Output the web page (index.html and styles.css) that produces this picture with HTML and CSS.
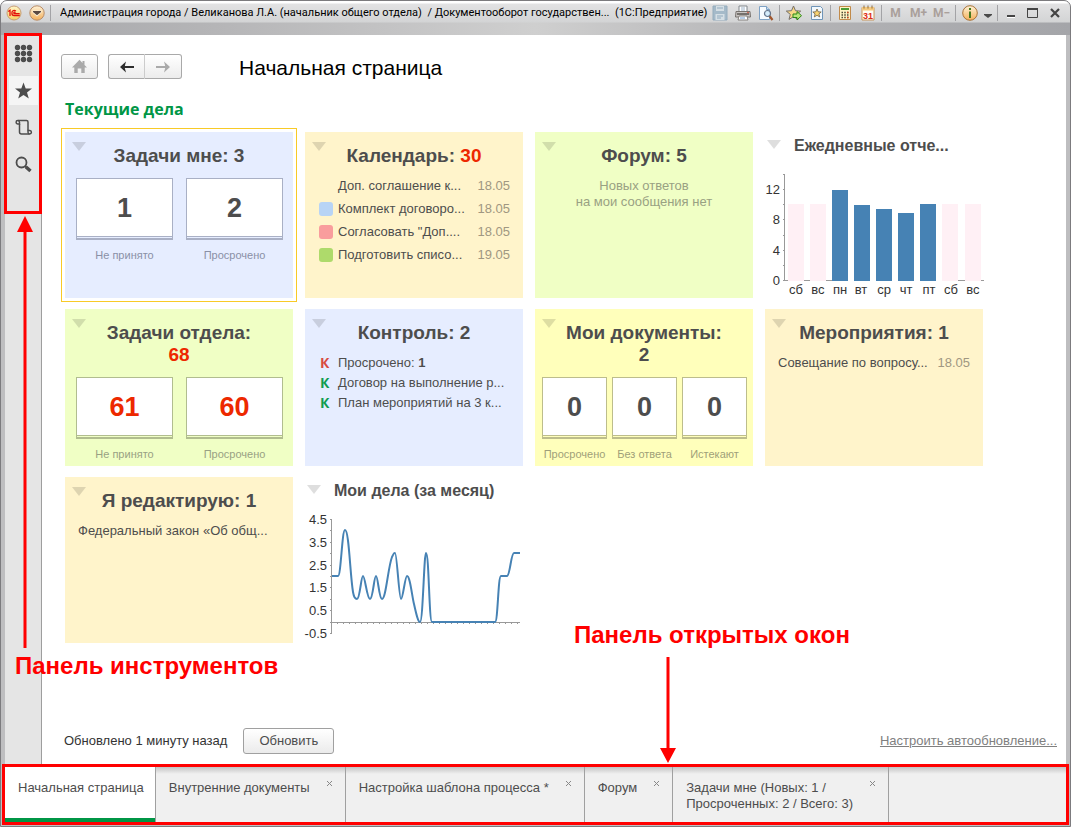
FILE: index.html
```html
<!DOCTYPE html>
<html lang="ru">
<head>
<meta charset="utf-8">
<meta name="viewport" content="width=device-width, initial-scale=1">
<title>Начальная страница</title>
<link rel="stylesheet" href="styles.css">
</head>
<body>
<div class="window">
  <header class="titlebar">
    <div class="titlebar-row">
      <button class="orb" aria-label="1С">
        <svg width="16" height="16" viewBox="0 0 16 16"><defs><linearGradient id="gold" x1="0" y1="0" x2="0" y2="1"><stop offset="0" stop-color="#fff6c8"/><stop offset="1" stop-color="#f6cf62"/></linearGradient><linearGradient id="amber" x1="0" y1="0" x2="0" y2="1"><stop offset="0" stop-color="#fff3d8"/><stop offset="1" stop-color="#f3b05c"/></linearGradient></defs><circle cx="8" cy="8" r="7" fill="url(#gold)" stroke="#c79d76"/><path d="M2.200 6.500 4 5.300V11M9.800 6.200C8.600 4.600 5.900 5.400 5.900 7.900c0 1.700 1 2.600 2.300 2.600h5.600M9.500 7.600c-.9-.9-1.700-.4-1.700.4 0 .5.400.7.900.7h5" fill="none" stroke="#e3120b" stroke-width="1.300"/></svg>
      </button>
      <button class="orb" aria-label="Главное меню">
        <svg width="16" height="16" viewBox="0 0 16 16"><circle cx="8" cy="8" r="7.200" fill="url(#amber)" stroke="#b98d68"/><path d="M3.500 5.500h9V7.500L8 11.500 3.500 7.500z" fill="#fff4dc"/><path d="M4 6h8v1L8 10.200 4 7z" fill="#5b4a42"/></svg>
      </button>
      <span class="sep"></span>
      <div class="caption">Администрация города / Великанова Л.А. (начальник общего отдела)&nbsp; / Документооборот государствен...&nbsp; (1С:Предприятие)</div>
      <div class="tools">
        <button class="tool" aria-label="Сохранить"><svg width="16" height="16" viewBox="0 0 16 16"><path d="M1 1h14v14H1z" fill="#a5bac9" stroke="#94acbd"/><path d="M4 1h8v5H4zM3.500 9h9v6h-9z" fill="#d5dfe5"/><path d="M5 3h6M5 11h6M5 13h4" stroke="#91aabd"/></svg></button>
        <button class="tool" aria-label="Печать"><svg width="16" height="16" viewBox="0 0 16 16"><path d="M4 7V1h8v6" fill="#fff" stroke="#80868c"/><path d="M6 3h4M6 5h4" stroke="#9db2c8"/><path d="M1 6.500h14l.5 5.500h-15z" fill="#c9c5c2" stroke="#77726e"/><path d="M2 9h12" stroke="#595450" stroke-width="1.500"/><path d="M4 11h8l1 4H3z" fill="#fff" stroke="#85817e"/><path d="M5 13h5" stroke="#6d9bd0"/><circle cx="13" cy="7.500" r=".8" fill="#d34b36"/></svg></button>
        <button class="tool" aria-label="Просмотр"><svg width="16" height="16" viewBox="0 0 16 16"><path d="M1.500 1.500h7l3 3v10h-10z" fill="#f7fbff" stroke="#7fa2c5"/><path d="M8.500 1.500v3h3" fill="#c5daed" stroke="#7fa2c5"/><path d="m11.500 11 3 4" stroke="#a0552c" stroke-width="2.200"/><circle cx="9.500" cy="8.500" r="3" fill="#d5ecfb" stroke="#64748b" stroke-width="1.200"/></svg></button>
        <span class="sep"></span>
        <button class="tool" aria-label="В избранное"><svg width="16" height="16" viewBox="0 0 16 16"><path d="m7.500 1 2 4.700 5.200.4-4 3.300 1.300 5-4.500-2.700L3 14.400l1.300-5-4-3.300 5.200-.4z" fill="#f8d886" stroke="#76706a"/><path d="M7 9h4V6.500l4.500 4.200L11 15v-2.500H7z" fill="#b9e67a" stroke="#2d8514"/></svg></button>
        <button class="tool" aria-label="Избранное"><svg width="16" height="16" viewBox="0 0 16 16"><path d="M2.500 1.500h9l2 2v11h-11z" fill="#f2f8fd" stroke="#6f95b8"/><path d="m8 4 1.200 2.800 3 .2-2.300 1.900.8 3L8 10.300 5.300 11.900l.8-3L3.800 7l3-.2z" fill="#f8d372" stroke="#6e6044" stroke-width=".8"/></svg></button>
        <span class="sep"></span>
        <button class="tool" aria-label="Калькулятор"><svg width="16" height="16" viewBox="0 0 16 16"><path d="M2.500 1.500h11v13h-11z" fill="#fff3c4" stroke="#c18a4a"/><path d="M4 3h8v2H4z" fill="#4a9c36"/><path d="M4.500 7.500h7M4.500 10h7M4.500 12.500h7" stroke="#4b4a35" stroke-width="1.500" stroke-dasharray="1.500 1.250"/><path d="M10 7.500h1.500M10 12.500h1.500" stroke="#d2441e" stroke-width="1.500"/></svg></button>
        <button class="tool" aria-label="Календарь"><svg width="16" height="16" viewBox="0 0 16 16"><path d="M2 2.500h12v12.500H2z" fill="#fffdf3" stroke="#c8965b"/><path d="M2 2h12v3.500H2z" fill="#f5c97d"/><path d="M4 .5v3M8 .5v3M12 .5v3" stroke="#8d6a3c"/><text x="8" y="13.500" class="cal-day">31</text></svg></button>
        <span class="sep"></span>
        <button class="tool memory">M</button>
        <button class="tool memory">M+</button>
        <button class="tool memory">M−</button>
        <span class="sep"></span>
        <button class="tool" aria-label="Справка"><svg width="16" height="16" viewBox="0 0 16 16"><circle cx="8" cy="8" r="7.300" fill="url(#amber)" stroke="#a97338"/><path d="M7 6.500h2V13H7zM7 3h2v2H7z" fill="#47791d"/></svg></button>
        <button class="tool tool-narrow" aria-label="Ещё"><svg width="10" height="12" viewBox="0 0 10 12"><path d="M1 7h8v1L5 11 1 8z" fill="#4a4a4a"/></svg></button>
        <span class="sep"></span>
        <button class="tool tool-window" aria-label="Свернуть"><svg width="14" height="14" viewBox="0 0 14 14"><path d="M3 9h8v2H3z" fill="#444"/><path d="M3 11h8v1H3z" fill="#fff"/></svg></button>
        <button class="tool tool-window" aria-label="Развернуть"><svg width="14" height="14" viewBox="0 0 14 14"><path d="M1.500 2.500h10v9h-10z" fill="none" stroke="#444"/><path d="M1 2h11v2H1z" fill="#444"/></svg></button>
        <button class="tool tool-window" aria-label="Закрыть"><svg width="14" height="14" viewBox="0 0 14 14"><path d="m3 3 8 8M11 3l-8 8" stroke="#444" stroke-width="2.200"/></svg></button>
      </div>
    </div>
  </header>

  <div class="workspace">
    <nav class="sidebar" aria-label="Панель инструментов">
      <button class="side-btn" aria-label="Меню"><svg width="19" height="19" viewBox="0 0 19 19" fill="#4d4d4d"><circle cx="3.500" cy="3.500" r="2.700"/><circle cx="9.500" cy="3.500" r="2.700"/><circle cx="15.500" cy="3.500" r="2.700"/><circle cx="3.500" cy="9.500" r="2.700"/><circle cx="9.500" cy="9.500" r="2.700"/><circle cx="15.500" cy="9.500" r="2.700"/><circle cx="3.500" cy="15.500" r="2.700"/><circle cx="9.500" cy="15.500" r="2.700"/><circle cx="15.500" cy="15.500" r="2.700"/></svg></button>
      <button class="side-btn side-btn-active" aria-label="Избранное"><svg width="19" height="19" viewBox="0 0 19 19"><path d="m9.500 1.500 2.200 6h6.300l-5 3.900 1.800 6.100-5.300-3.600-5.300 3.600L6 11.400 1 7.500h6.300z" fill="#4d4d4d"/></svg></button>
      <button class="side-btn" aria-label="История"><svg width="19" height="19" viewBox="0 0 19 19" fill="none" stroke="#4d4d4d" stroke-width="1.500"><path d="M4 2.500h8.500c1 0 1.500.6 1.500 1.500v8.500M5.500 6v8c0 1.300.8 2 2 2h8"/><path d="M5.500 6H3.700A1.700 1.700 0 1 1 5.500 4.200zM14 12.500h1.800a1.700 1.700 0 1 1-1.800 1.800z"/></svg></button>
      <button class="side-btn" aria-label="Поиск"><svg width="19" height="19" viewBox="0 0 19 19" fill="none" stroke="#4d4d4d"><circle cx="7.500" cy="7.500" r="5" stroke-width="1.800"/><path d="m11 11 1.500 1.500" stroke-width="2"/><path d="m12 12 4.500 4" stroke-width="3.400"/></svg></button>
    </nav>

    <main class="page">
      <div class="page-head">
        <button class="head-btn" aria-label="Домой"><svg width="17" height="15" viewBox="0 0 17 15"><path d="M8.500.8 11.500 4V2h2v4l2.500 2.600h-2.300V14h-3.400V9.500H6.700V14H3.300V8.600H1z" fill="#aaa"/></svg></button>
        <div class="head-group">
          <button class="head-btn" aria-label="Назад"><svg width="16" height="14" viewBox="0 0 16 14"><path d="M1 7 7 1.500 5.800 6H15v2H5.800L7 12.500z" fill="#2d2d2d"/></svg></button>
          <button class="head-btn" aria-label="Вперёд"><svg width="16" height="14" viewBox="0 0 16 14"><path d="M15 7 9 1.500 10.200 6H1v2h9.200L9 12.500z" fill="#aaa"/></svg></button>
        </div>
        <h1>Начальная страница</h1>
      </div>

      <h2>Текущие дела</h2>

      <div class="dashboard">
        <section class="tile blue selected">
          <span class="marker"></span>
          <h3>Задачи мне: 3</h3>
          <div class="counters">
            <div class="counter"><a href="#" class="count">1</a><span>Не принято</span></div>
            <div class="counter"><a href="#" class="count">2</a><span>Просрочено</span></div>
          </div>
        </section>

        <section class="tile sand">
          <span class="marker"></span>
          <h3>Календарь: <b class="alert">30</b></h3>
          <ul class="list events">
            <li><i class="swatch"></i><span>Доп. соглашение к...</span><time>18.05</time></li>
            <li><i class="swatch swatch-blue"></i><span>Комплект договоро...</span><time>18.05</time></li>
            <li><i class="swatch swatch-red"></i><span>Согласовать "Доп....</span><time>18.05</time></li>
            <li><i class="swatch swatch-green"></i><span>Подготовить списо...</span><time>19.05</time></li>
          </ul>
        </section>

        <section class="tile green">
          <span class="marker"></span>
          <h3>Форум: 5</h3>
          <p class="note">Новых ответов<br>на мои сообщения нет</p>
        </section>

        <section class="tile chart">
          <div class="chart-head"><span class="chart-marker"></span><h4>Ежедневные отче...</h4></div>
          <svg class="plot" viewBox="0 0 218 136" role="img" aria-label="Ежедневные отчеты">
            <g fill="#fff0f5"><path d="M23 42h16v77H23zM45 42h16v77H45zM177 42h16v77h-16zM200 42h16v77h-16z"/></g>
            <path d="M19.500 12v107M18 12.500h2M18 27.500h2M18 42.500h2M18 57.500h2M18 73.500h2M18 88.500h2M18 103.500h2M18 118.500h5M39 118.500h6M61 118.500h6M193 118.500h7M216 118.500h3" stroke="#999" fill="none"/>
            <path d="M67 28h16v91H67zM89 43h16v76H89zM111 47h16v72h-16zM133 51h16v68h-16zM155 42h16v77h-16z" fill="#4682b4"/>
            <g class="axis-y"><text x="15" y="32">12</text><text x="15" y="62">8</text><text x="15" y="93">4</text><text x="15" y="123">0</text></g>
            <g class="axis-x"><text x="31" y="132">сб</text><text x="53" y="132">вс</text><text x="75" y="132">пн</text><text x="96" y="132">вт</text><text x="119" y="132">ср</text><text x="141" y="132">чт</text><text x="164" y="132">пт</text><text x="186" y="132">сб</text><text x="208" y="132">вс</text></g>
          </svg>
        </section>

        <section class="tile green">
          <span class="marker"></span>
          <h3>Задачи отдела:<br><b class="alert">68</b></h3>
          <div class="counters">
            <div class="counter"><a href="#" class="count alert">61</a><span>Не принято</span></div>
            <div class="counter"><a href="#" class="count alert">60</a><span>Просрочено</span></div>
          </div>
        </section>

        <section class="tile blue">
          <span class="marker"></span>
          <h3>Контроль: 2</h3>
          <ul class="list controls">
            <li><b class="flag flag-red">К</b><span>Просрочено: <b>1</b></span></li>
            <li><b class="flag">К</b><span>Договор на выполнение р...</span></li>
            <li><b class="flag">К</b><span>План мероприятий на 3 к...</span></li>
          </ul>
        </section>

        <section class="tile yellow">
          <span class="marker"></span>
          <h3>Мои документы:<br>2</h3>
          <div class="counters counters-three">
            <div class="counter"><a href="#" class="count">0</a><span>Просрочено</span></div>
            <div class="counter"><a href="#" class="count">0</a><span>Без ответа</span></div>
            <div class="counter"><a href="#" class="count">0</a><span>Истекают</span></div>
          </div>
        </section>

        <section class="tile sand">
          <span class="marker"></span>
          <h3>Мероприятия: 1</h3>
          <ul class="list">
            <li><span>Совещание по вопросу...</span><time>18.05</time></li>
          </ul>
        </section>

        <section class="tile sand">
          <span class="marker"></span>
          <h3>Я редактирую: 1</h3>
          <ul class="list">
            <li><span>Федеральный закон «Об общ...</span></li>
          </ul>
        </section>

        <section class="tile chart">
          <div class="chart-head"><span class="chart-marker"></span><h4>Мои дела (за месяц)</h4></div>
          <svg class="plot" viewBox="0 0 218 136" role="img" aria-label="Мои дела за месяц">
            <path d="M26.500 12v115M25 12.500h2M25 23.500h2M25 35.500h2M25 46.500h2M25 58.500h2M25 69.500h2M25 80.500h2M25 92.500h2M25 103.500h2M25 126.500h2M25 115.500h190" stroke="#999" fill="none"/>
            <path d="M32 116.500h183" stroke="#999" stroke-dasharray="1 5" fill="none"/>
            <path d="M27 69h6C36 69 37 23 40 23c4 0 5 44 8 62 1 6 3 7 4 7 3 0 4-23 6-23s4 23 7 23 4-23 6-23 3 23 6 23c4 0 6-32 10-42 2-4 2-4 3-4 2 0 4 46 6 46s4-23 6-23c3 0 5 20 7 28 2 9 4 18 6 18 3 0 4-69 6-69 3 0 3 69 6 69h63c3 0 3-46 6-46h6c3 0 4-23 7-23h6" fill="none" stroke="#4682b4" stroke-width="2"/>
            <g class="axis-y"><text x="22" y="17">4.5</text><text x="22" y="40">3.5</text><text x="22" y="63">2.5</text><text x="22" y="85">1.5</text><text x="22" y="108">0.5</text><text x="22" y="131">-0.5</text></g>
          </svg>
        </section>
      </div>

      <footer class="page-foot">
        <span>Обновлено 1 минуту назад</span>
        <button class="refresh">Обновить</button>
        <a href="#" class="auto">Настроить автообновление...</a>
      </footer>
    </main>

    <div class="mark mark-toolbar">
      <div class="mark-frame"></div>
      <svg class="arrow-up" width="16" height="432" viewBox="0 0 16 432"><path d="M8 0 16 16H9.500v416h-3V16H0z" fill="#f00"/></svg>
      <strong>Панель инструментов</strong>
    </div>
    <div class="mark mark-tabs">
      <strong>Панель открытых окон</strong>
      <svg width="16" height="106" viewBox="0 0 16 106"><path d="M6.500 0h3v91H16L8 106 0 91h6.500z" fill="#f00"/></svg>
    </div>
  </div>

  <nav class="tabs" aria-label="Панель открытых окон">
    <div class="tab tab-active"><a href="#">Начальная страница</a></div>
    <div class="tab"><a href="#">Внутренние документы</a><button class="close" aria-label="Закрыть"><svg width="7" height="7" viewBox="0 0 7 7"><path d="m1 1 5 5M6 1 1 6" stroke="#888"/></svg></button></div>
    <div class="tab"><a href="#">Настройка шаблона процесса *</a><button class="close" aria-label="Закрыть"><svg width="7" height="7" viewBox="0 0 7 7"><path d="m1 1 5 5M6 1 1 6" stroke="#888"/></svg></button></div>
    <div class="tab"><a href="#">Форум</a><button class="close" aria-label="Закрыть"><svg width="7" height="7" viewBox="0 0 7 7"><path d="m1 1 5 5M6 1 1 6" stroke="#888"/></svg></button></div>
    <div class="tab"><a href="#">Задачи мне (Новых: 1 /<br>Просроченных: 2 / Всего: 3)</a><button class="close" aria-label="Закрыть"><svg width="7" height="7" viewBox="0 0 7 7"><path d="m1 1 5 5M6 1 1 6" stroke="#888"/></svg></button></div>
  </nav>
</div>
</body>
</html>
```
FILE: styles.css
```css
* { box-sizing: border-box; }

body {
  margin: 0;
  background: #fff;
  color: #4d4d4d;
  font: 13px/16px "Liberation Sans", Arial, sans-serif;
}

button {
  margin: 0;
  padding: 0;
  border: 0;
  background: none;
  color: inherit;
  font: inherit;
}

a { color: inherit; text-decoration: none; }
svg { display: block; flex: none; }
h1, h2, h3, h4, p, ul { margin: 0; padding: 0; }
ul { list-style: none; }

.window {
  display: flex;
  flex-direction: column;
  min-height: 100vh;
  border: 1px solid #7c7b7e;
  border-radius: 7px 7px 0 0;
  background: #bebec0;
  overflow: hidden;
}

/* Title bar */
.titlebar {
  padding: 2px 4px 12px 5px;
  background:
    linear-gradient(#fff 0, #fff 2px, #e2e2e3 3px, #d3d4d5 21px, transparent 22px),
    linear-gradient(90deg, #a6a7aa, #b5b5b7 20%, #cfcfcf 50%, #b5b5b7 72%, #a4a5a9);
}

.titlebar-row { display: flex; align-items: center; height: 20px; }
.orb { flex: none; width: 16px; height: 16px; margin-right: 7px; }
.orb + .sep { margin: 0 9px 0 -2px; }

.caption {
  flex: 1;
  min-width: 0;
  overflow: hidden;
  color: #000;
  font: 11px/16px Roboto, "Liberation Sans", sans-serif;
  white-space: nowrap;
}

.tools { display: flex; align-items: center; }
.sep { flex: none; width: 1px; height: 16px; margin: 0 2px; background: #a3a3a6; }
.tool { display: flex; align-items: center; justify-content: center; width: 23px; height: 18px; }
.tool-narrow { width: 14px; }
.tool-window { width: 22px; }
.memory { color: #aaa09b; font: bold 12px/16px Roboto, sans-serif; }
.cal-day { fill: #de2b16; font: bold 9px "Liberation Sans", sans-serif; text-anchor: middle; }

/* Work area */
.workspace {
  position: relative;
  display: flex;
  flex: 1;
  margin: 0 4px;
}

.sidebar {
  display: flex;
  flex: none;
  flex-direction: column;
  align-items: center;
  gap: 8px;
  width: 37px;
  padding-top: 4px;
  border-right: 1px solid #9e9e9e;
  background: #e5e5e5;
}

.side-btn { display: flex; align-items: center; justify-content: center; width: 29px; height: 29px; }
.side-btn-active { background: #f5f5f5; }

.page {
  display: flex;
  flex: 1;
  flex-direction: column;
  min-width: 0;
  padding: 19px 9px 12px 19px;
  background: #fff;
}

.page-head { display: flex; align-items: flex-start; gap: 10px; }

.head-btn {
  display: flex;
  align-items: center;
  justify-content: center;
  width: 37px;
  height: 25px;
  border: 1px solid #a9a9a9;
  border-radius: 3px;
  background: linear-gradient(#fff, #ececec);
}

.head-group { display: flex; }
.head-group .head-btn:first-child { border-right-color: #ccc; border-radius: 3px 0 0 3px; }
.head-group .head-btn:last-child { border-left: 0; border-radius: 0 3px 3px 0; }
h1 { margin-left: 47px; color: #000; font-size: 21px; font-weight: 400; line-height: 28px; }

h2 {
  margin: 15px 0 0 4px;
  color: #009646;
  font: bold 16px/24px "Open Sans", "Noto Sans", sans-serif;
}

.dashboard {
  display: grid;
  grid-template-columns: 228fr 218fr 218fr 218fr;
  grid-template-rows: minmax(166px, auto) minmax(157px, auto) minmax(166px, auto);
  gap: 11px 12px;
  max-width: 922px;
  padding: 11px 0 0 4px;
}

.tile { position: relative; min-width: 0; padding-top: 13px; background: var(--fill); }
.blue { --line: #a9b0c5; --muted: #8a90a6; --fill: #e6edff; }
.sand { --line: #c2b68f; --muted: #a09781; --fill: #fff4cb; }
.green { --line: #b1bd8f; --muted: #99a183; --fill: #f0ffc5; }
.yellow { --line: #bdbd8c; --muted: #9f9f79; --fill: #ffffbb; }
.selected { outline: 1px solid #f8ca27; outline-offset: 3px; }

.marker, .chart-marker {
  border: 7px solid transparent;
  border-top: 9px solid rgba(0, 0, 0, .13);
  border-bottom: 0;
}

.marker { position: absolute; top: 10px; left: 7px; }
h3 { color: #4d4d4d; font-size: 19px; line-height: 22px; text-align: center; }
.alert { color: #ed2800; }

.counters { display: flex; gap: 13px; margin-top: 11px; padding: 0 10px 0 11px; }
.counters-three { gap: 5px; padding: 0 6px 0 7px; }
.counter { flex: 1; min-width: 0; color: var(--muted); font-size: 11px; line-height: 14px; text-align: center; white-space: nowrap; }

.count {
  display: block;
  height: 62px;
  margin-bottom: 8px;
  border: 1px solid var(--line);
  border-bottom-width: 2px;
  background: #fff;
  box-shadow: inset 0 -1px var(--fill), inset 0 -2px var(--line);
  color: #4d4d4d;
  font-size: 27px;
  font-weight: 700;
  line-height: 59px;
}

.count.alert { color: #ed2800; }

.list { margin: 9px 13px 0; line-height: 20px; white-space: nowrap; }
.list li { display: flex; align-items: center; }
.list time { margin-left: auto; color: var(--muted); }
.events { margin-top: 7px; line-height: 23px; }
.swatch { flex: none; width: 14px; height: 14px; margin: 0 5px 0 1px; border-radius: 3px; }
.swatch-blue { background: #b8d4f5; }
.swatch-red { background: #f99d9d; }
.swatch-green { background: #aeda6b; }
.flag { width: 18px; padding-left: 2px; color: #119c50; font: bold 14px/20px "Open Sans", "Noto Sans", sans-serif; }
.flag + span { margin-left: 2px; }
.flag-red { color: #d84b40; }
.note { margin-top: 11px; color: var(--muted); text-align: center; }

.chart { padding-top: 5px; }
.chart-head { display: flex; align-items: center; gap: 13px; padding-left: 2px; }
.chart-marker { flex: none; margin-bottom: 4px; }
h4 { font-size: 16px; line-height: 18px; white-space: nowrap; }
.plot { width: 100%; margin-top: 7px; overflow: visible; }
.plot text { fill: #333; font: 13px "Liberation Sans", sans-serif; }
.axis-y { text-anchor: end; }
.axis-x { text-anchor: middle; }

.page-foot { display: flex; align-items: center; margin-top: auto; padding-left: 3px; color: #333; }

.refresh {
  height: 26px;
  margin-left: 16px;
  padding: 0 15px;
  border: 1px solid #a0a0a0;
  border-radius: 3px;
  background: linear-gradient(#fff, #ebebeb);
  color: #4d4d4d;
}

.auto { margin-left: auto; color: #808080; text-decoration: underline; }

/* Open windows */
.tabs {
  position: relative;
  display: flex;
  margin: 0 4px 4px;
  background: linear-gradient(#bcbcbc, #f0f0f0 8px);
}

.tabs::after {
  position: absolute;
  inset: -2px -3px -3px;
  border: 3px solid #f00;
  content: "";
  pointer-events: none;
}

.tab {
  display: flex;
  gap: 16px;
  min-height: 56px;
  padding: 14px 12px 9px 13px;
  border-right: 1px solid #a0a0a0;
  white-space: nowrap;
}

.tab-active { padding-right: 11px; background: #fff; box-shadow: inset 0 -4px #009646; }
.close { align-self: flex-start; width: 7px; height: 7px; }

/* Callouts */
.mark { position: absolute; color: #f00; font-size: 24px; line-height: 28px; white-space: nowrap; }
.mark strong { display: block; }
.mark-toolbar { top: -2px; left: -1px; }
.mark-frame { width: 38px; height: 181px; border: 3px solid #f00; }
.arrow-up { margin: 2px 0 0 13px; }
.mark-toolbar strong { margin: 4px 0 0 11px; }
.mark-tabs { bottom: 3px; left: 569px; }
.mark-tabs svg { margin: 8px 0 0 86px; }
```
